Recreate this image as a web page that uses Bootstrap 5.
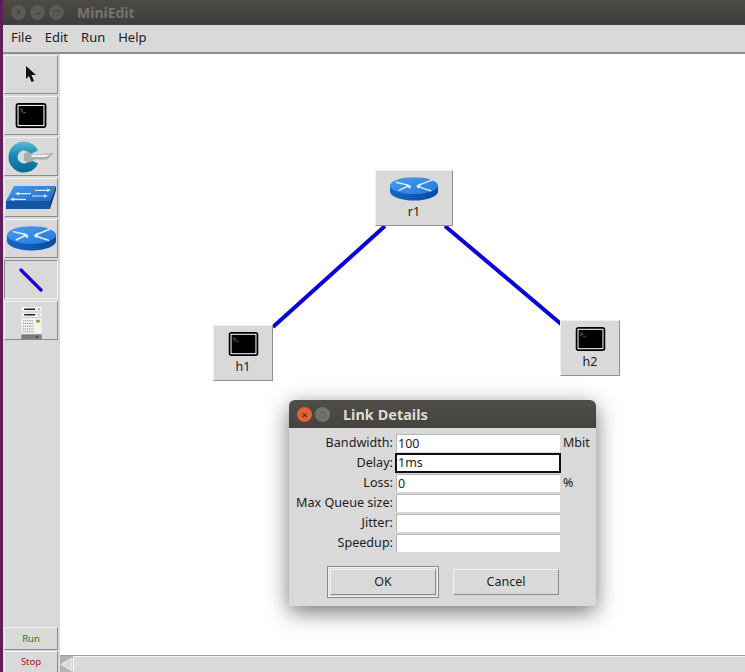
<!DOCTYPE html>
<html lang="en">
<head>
    <meta charset="UTF-8">
    <title>MiniEdit</title>
    <link rel="stylesheet" href="https://cdn.jsdelivr.net/npm/bootstrap@5.3.0/dist/css/bootstrap.min.css">
    <style>
        html, body { height: 672px; overflow: hidden; }
        body { background: #fff; font-family: "Noto Sans", "Liberation Sans", sans-serif; color: #1c1c1c; font-size: 12.5px; }
        .desk-strip { width: 3px; background: #5e1f5c; flex: none; }
        .win-title { height: 25px; background: linear-gradient(#4d4b46, #3f3d39); padding-left: 8px; gap: 4px; flex: none; }
        .win-dot { width: 15px; height: 15px; border-radius: 50%; background: #5c5a55; color: #3f3d39; font-size: 10px; line-height: 15px; text-align: center; flex: none; }
        .win-name { color: #75736d; font-weight: 700; font-size: 14px; margin-left: 9px; }
        .menu-bar { height: 29px; background: #d9d9d9; border-bottom: 2px solid #8f8f8f; padding: 0 0 2px 8px; gap: 13px; font-size: 13px; flex: none; }
        .tool-col { width: 57px; background: #d9d9d9; padding: 1px 0 0 1px; flex: none; gap: 2px; }
        .tool-btn { width: 54px; height: 39px; padding: 0; border-radius: 0; background: #d9d9d9; border: 1px solid; border-color: #f2f2f2 #8a8a8a #8a8a8a #f2f2f2; }
        .tool-on { border-color: #8a8a8a #f5f5f5 #f5f5f5 #8a8a8a; }
        .run-btn { width: 54px; padding: 0; border-radius: 0; background: #d9d9d9; border: 1px solid; border-color: #f2f2f2 #8a8a8a #8a8a8a #f2f2f2; font-size: 9.5px; line-height: 18px; }
        .run-go { height: 23px; color: #1d7a1d; }
        .run-halt { height: 21px; color: #a52020; border-bottom: 0; }
        .canvas-area { position: relative; background: #fff; }
        .net-lines { position: absolute; left: 0; top: 0; }
        .net-node { position: absolute; background: #d9d9d9; border: 1px solid; border-color: #f0f0f0 #8f8f8f #8f8f8f #f0f0f0; text-align: center; font-size: 12.5px; line-height: 16px; }
        .net-node svg { display: block; margin: 6px auto 3px; }
        .scroll-row { height: 17px; background: #d9d9d9; border-top: 1px solid #9a9a9a; flex: none; }
        .scroll-arrow { width: 13px; background: #b4b4b4; flex: none; }
        .scroll-thumb { background: #d9d9d9; border-left: 1px solid #f5f5f5; border-top: 1px solid #f5f5f5; }
        .link-dialog { position: absolute; left: 229px; top: 346px; width: 307px; height: 206px; background: #d9d9d9; border-radius: 6px 6px 0 0; box-shadow: 0 6px 22px rgba(0,0,0,.55); }
        .dlg-title { height: 28px; background: linear-gradient(#504e49, #45433e); border-radius: 6px 6px 0 0; padding-left: 8px; gap: 3px; }
        .dlg-close { width: 15px; height: 15px; border-radius: 50%; background: #e0603a; color: #4a2014; font-size: 11px; line-height: 15px; text-align: center; }
        .dlg-max { width: 15px; height: 15px; border-radius: 50%; background: #75736e; color: #4d4b46; font-size: 9px; line-height: 15px; text-align: center; }
        .dlg-name { color: #dfdbd2; font-weight: 700; font-size: 14.5px; margin: 1px 0 0 10px; }
        .dlg-form { display: grid; grid-template-columns: 104px 164px auto; column-gap: 3px; row-gap: 2px; padding: 6px 0 0 0; align-items: center; }
        .dlg-label { text-align: right; font-size: 12.6px; line-height: 18px; }
        .dlg-input { height: 18px; padding: 0 1px; border: 0; border-radius: 0; background: #fff; font-size: 12.5px; line-height: 18px; color: #1c1c1c; box-shadow: none; border-top: 1px solid #b5b5b5; border-left: 1px solid #b5b5b5; }
        .dlg-focus { outline: 2px solid #111; outline-offset: -1px; border: 0; padding-left: 2px; }
        .dlg-unit { font-size: 12.5px; line-height: 18px; }
        .dlg-actions { padding: 14px 0 0 38px; gap: 14px; }
        .dlg-focusbox { border: 1px solid #8a8a8a; outline: 1px solid #f2f2f2; outline-offset: -2px; padding: 2px; width: 112px; height: 32px; }
        .dlg-btn { padding: 0; border-radius: 0; background: #d9d9d9; border: 1px solid; border-color: #f2f2f2 #8a8a8a #8a8a8a #f2f2f2; font-size: 12.5px; color: #1c1c1c; }
        .dlg-ok { width: 100%; height: 100%; }
        .dlg-cancel { width: 106px; height: 26px; margin-top: 3px; }
    </style>
</head>
<body>
<svg width="0" height="0" class="position-absolute">
    <defs>
        <linearGradient id="routerTop" x1="0" y1="0" x2="1" y2="1"><stop offset="0" stop-color="#4a9dec"/><stop offset="1" stop-color="#2478dc"/></linearGradient>
        <linearGradient id="routerSide" x1="0" y1="0" x2="1" y2="0"><stop offset="0" stop-color="#1766c8"/><stop offset="1" stop-color="#0a4a9f"/></linearGradient>
        <linearGradient id="switchTop" x1="0" y1="0" x2="1" y2="1"><stop offset="0" stop-color="#4b9bea"/><stop offset="1" stop-color="#1f68c4"/></linearGradient>
        <linearGradient id="ringBlue" gradientUnits="userSpaceOnUse" x1="0" y1="0" x2="0" y2="32"><stop offset="0" stop-color="#62bcd9"/><stop offset=".45" stop-color="#1488b6"/><stop offset="1" stop-color="#0a6895"/></linearGradient>
        <symbol id="ico-term" viewBox="0 0 32 26">
            <rect x="0" y="0" width="32" height="26" rx="3" fill="#000"/>
            <rect x="2.500" y="2.500" width="27" height="21" fill="#000" stroke="#fff" stroke-width="1.100"/>
            <path d="M5 6l2.500 1.800L5 9.500M8 10h2.500" fill="none" stroke="#22b030" stroke-width="1"/>
        </symbol>
        <symbol id="ico-router" viewBox="0 0 52 25" preserveAspectRatio="none">
            <path d="M1 9v6c0 5 11 9.500 25 9.500s25-4.500 25-9.500V9z" fill="url(#routerSide)"/>
            <ellipse cx="26" cy="9" rx="25" ry="8.800" fill="url(#routerTop)"/>
            <path d="M7 5.500l13 3M45 3L31 8.500M10 14l11-5M30 10l14 4.500" stroke="#e3eefa" stroke-width="1.500" fill="none"/>
            <path d="M22 9l-4.500 1.200.8-3.400zM28.500 9.300l3.800-2.700.9 3.200zM23 8.500l-1.200 4-2.600-2.600zM28 9l4.200.5-1.600 2.700z" fill="#e3eefa"/>
        </symbol>
    </defs>
</svg>
<div class="d-flex" style="height:672px">
    <div class="desk-strip"></div>
    <div class="d-flex flex-column flex-grow-1" style="min-width:0">
        <div class="win-title d-flex align-items-center">
            <span class="win-dot">×</span>
            <span class="win-dot">–</span>
            <span class="win-dot">□</span>
            <span class="win-name">MiniEdit</span>
        </div>
        <div class="menu-bar d-flex align-items-center">
            <span>File</span><span>Edit</span><span>Run</span><span>Help</span>
        </div>
        <div class="d-flex flex-grow-1" style="min-height:0">
            <div class="tool-col d-flex flex-column">
                <button class="btn tool-btn d-flex align-items-center justify-content-center">
                    <svg width="12" height="17" viewBox="0 0 12 17"><path d="M1 0v13l3-3 2.500 6 2.500-1-2.500-6H11z" fill="#111"/></svg>
                </button>
                <button class="btn tool-btn d-flex align-items-center justify-content-center">
                    <svg width="32" height="25"><use href="#ico-term"/></svg>
                </button>
                <button class="btn tool-btn d-flex align-items-center justify-content-center">
                    <svg width="46" height="32" viewBox="0 0 46 32">
                        <path d="M26 11.400A11 11 0 1 0 26 20.600" fill="none" stroke="url(#ringBlue)" stroke-width="9"/>
                        <path d="M16 13l4-2.500 5 3 21-1.500-7 6.500H26l-4 3-6-2z" fill="#a9aeb2"/>
                        <path d="M23 14l19-.5-4 2.500H24z" fill="#eef0f0"/>
                    </svg>
                </button>
                <button class="btn tool-btn d-flex align-items-center justify-content-center">
                    <svg width="50" height="23" viewBox="0 0 50 23">
                        <path d="M0 15L8 0h42l-6 15z" fill="url(#switchTop)"/>
                        <path d="M0 15h44v8H0z" fill="#14559f"/>
                        <path d="M44 15l6-15v4l-6 19z" fill="#0d3d7c"/>
                        <path d="M29 4.300h14M11 7.600h14M26 10h14M6 13.300h14" stroke="#d9e8f7" stroke-width="1.200"/>
                        <path d="M41 2.500l4 1.800-4 1.800zM13 5.800L9 7.600l4 1.800zM38 8.200l4 1.800-4 1.800zM8 11.500l-4 1.800 4 1.800z" fill="#d9e8f7"/>
                    </svg>
                </button>
                <button class="btn tool-btn d-flex align-items-center justify-content-center">
                    <svg width="51" height="25"><use href="#ico-router"/></svg>
                </button>
                <button class="btn tool-btn tool-on d-flex align-items-center justify-content-center">
                    <svg width="24" height="24" viewBox="0 0 24 24"><path d="M2 2l20 20" stroke="#1400d8" stroke-width="3.200" stroke-linecap="round"/></svg>
                </button>
                <button class="btn tool-btn pt-1 d-flex align-items-center justify-content-center">
                    <svg width="23" height="34" viewBox="0 0 24 37">
                        <rect x="1" y="1" width="22" height="30" fill="#f2f2ee"/>
                        <path d="M1 6.500h22M1 12.500h22M1 31h22" stroke="#b5b5b5" stroke-width=".8"/>
                        <path d="M4 3.500h12M4 9.500h12" stroke="#222" stroke-width="1.500"/>
                        <circle cx="20" cy="3.500" r=".9" fill="#b33"/><circle cx="20" cy="9.500" r=".9" fill="#999"/>
                        <path d="M3 16h12M3 19h12M3 22h12M3 25h12M3 28h12" stroke="#777" stroke-width="1.200" stroke-dasharray="1 1"/>
                        <rect x="17" y="15" width="4" height="3" fill="#7d9a58"/>
                        <rect x="1" y="31" width="22" height="5" fill="#7c7c7c"/>
                        <circle cx="18" cy="33.500" r="1" fill="#333"/>
                    </svg>
                </button>
                <div class="mt-auto d-flex flex-column" style="gap:1px">
                    <button class="btn run-btn run-go">Run</button>
                    <button class="btn run-btn run-halt">Stop</button>
                </div>
            </div>
            <div class="d-flex flex-column flex-grow-1" style="min-width:0">
                <div class="canvas-area flex-grow-1">
                    <svg class="net-lines" width="685" height="600">
                        <path d="M325 172L213 273M385 172L501 270" stroke="#0a00d8" stroke-width="4" fill="none"/>
                    </svg>
                    <div class="net-node" style="left:315px;top:116px;width:78px;height:56px">
                        <svg width="50" height="24"><use href="#ico-router"/></svg>r1
                    </div>
                    <div class="net-node" style="left:153px;top:271px;width:60px;height:56px">
                        <svg width="31" height="24"><use href="#ico-term"/></svg>h1
                    </div>
                    <div class="net-node" style="left:500px;top:266px;width:60px;height:56px">
                        <svg width="31" height="24"><use href="#ico-term"/></svg>h2
                    </div>
                    <div class="link-dialog">
                        <div class="dlg-title d-flex align-items-center">
                            <span class="dlg-close">×</span>
                            <span class="dlg-max">□</span>
                            <span class="dlg-name">Link Details</span>
                        </div>
                        <div class="dlg-form">
                            <span class="dlg-label">Bandwidth:</span><input class="form-control dlg-input" value="100"><span class="dlg-unit">Mbit</span>
                            <span class="dlg-label">Delay:</span><input class="form-control dlg-input dlg-focus" value="1ms"><span></span>
                            <span class="dlg-label">Loss:</span><input class="form-control dlg-input" value="0"><span class="dlg-unit">%</span>
                            <span class="dlg-label">Max Queue size:</span><input class="form-control dlg-input"><span></span>
                            <span class="dlg-label">Jitter:</span><input class="form-control dlg-input"><span></span>
                            <span class="dlg-label">Speedup:</span><input class="form-control dlg-input"><span></span>
                        </div>
                        <div class="dlg-actions d-flex">
                            <div class="dlg-focusbox"><button class="btn dlg-btn dlg-ok">OK</button></div>
                            <button class="btn dlg-btn dlg-cancel">Cancel</button>
                        </div>
                    </div>
                </div>
                <div class="scroll-row d-flex">
                    <div class="scroll-arrow d-flex align-items-center justify-content-center">
                        <svg width="13" height="15" viewBox="0 0 13 15"><path d="M1 7.500L12 1v13z" fill="#d9d9d9" stroke="#f2f2f2"/></svg>
                    </div>
                    <div class="scroll-thumb flex-grow-1"></div>
                </div>
            </div>
        </div>
    </div>
</div>
</body>
</html>
